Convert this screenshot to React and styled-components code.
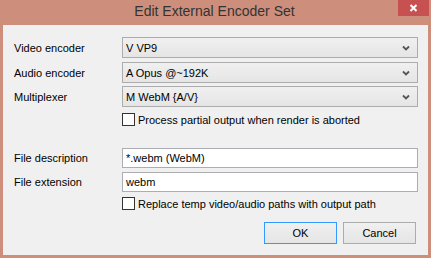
import React from 'react';
import styled, { createGlobalStyle } from 'styled-components';

const GlobalStyle = createGlobalStyle`
  html, body {
    margin: 0;
    padding: 0;
    background: #cd8e7b;
  }
  body {
    font-family: 'Liberation Sans', Arial, sans-serif;
    font-size: 11px;
    color: #000;
  }
`;

const Window = styled.div`
  width: 431px;
  height: 258px;
  box-sizing: border-box;
  background: #cd8e7b;
  display: flex;
  flex-direction: column;
`;

const TitleBar = styled.div`
  height: 25px;
  flex: none;
  display: grid;
  grid-template-columns: 1fr auto 1fr;
  padding-right: 2px;
`;

const Title = styled.div`
  grid-column: 2;
  font-size: 14px;
  line-height: 22px;
  color: #333;
  white-space: nowrap;
`;

const CloseButton = styled.div`
  grid-column: 3;
  justify-self: end;
  width: 31px;
  height: 16px;
  background: #c75050;
  display: flex;
  align-items: center;
  justify-content: center;
`;

const Client = styled.div`
  flex: 1;
  margin: 0 3px 3px;
  background: #f0f0f0;
  padding: 12px 10px 0 11px;
  display: flex;
  flex-direction: column;
`;

const FieldRow = styled.div`
  display: grid;
  grid-template-columns: 108px 296px;
  align-items: center;
  margin-top: ${(p) => p.$space || 0}px;
`;

const Label = styled.span`
  white-space: nowrap;
`;

const Combo = styled.div`
  grid-column: 2;
  height: 21px;
  box-sizing: border-box;
  border: 1px solid #acacac;
  background: linear-gradient(#f0f0f0, #e5e5e5);
  display: flex;
  align-items: center;
  padding: 0 7px 0 3px;
  justify-content: space-between;
`;

const TextInput = styled.div`
  grid-column: 2;
  height: 20px;
  box-sizing: border-box;
  border: 1px solid #abadb3;
  background: #fff;
  display: flex;
  align-items: center;
  padding: 0 3px;
`;

const CheckRow = styled.label`
  grid-column: 2;
  display: flex;
  align-items: center;
  gap: 3px;
  height: 13px;
  white-space: nowrap;
`;

const Box = styled.span`
  width: 13px;
  height: 13px;
  box-sizing: border-box;
  border: 1px solid #333;
  background: #fff;
  flex: none;
`;

const ButtonBar = styled.div`
  display: flex;
  justify-content: flex-end;
  gap: 6px;
  margin-top: 12px;
  padding-right: 2px;
`;

const Button = styled.div`
  width: 73px;
  height: 22px;
  box-sizing: border-box;
  border: 1px solid ${(p) => (p.$default ? '#3399ff' : '#acacac')};
  background: linear-gradient(#f0f0f0, #e5e5e5);
  display: flex;
  align-items: center;
  justify-content: center;
`;

const Chevron = () => (
  <svg width="8" height="6" viewBox="0 0 8 6">
    <path d="M1 1.5 L4 4.5 L7 1.5" fill="none" stroke="#555" strokeWidth="1.8" />
  </svg>
);

const CloseIcon = () => (
  <svg width="9" height="8" viewBox="0 0 9 8">
    <path d="M1.5 1 L7.5 7 M7.5 1 L1.5 7" stroke="#fff" strokeWidth="2" />
  </svg>
);

const selects = [
  { label: 'Video encoder', value: 'V VP9', space: 0 },
  { label: 'Audio encoder', value: 'A Opus @~192K', space: 4 },
  { label: 'Multiplexer', value: 'M WebM {A/V}', space: 3 },
];

export default function App() {
  return (
    <>
      <GlobalStyle />
      <Window>
        <TitleBar>
          <Title>Edit External Encoder Set</Title>
          <CloseButton>
            <CloseIcon />
          </CloseButton>
        </TitleBar>
        <Client>
          {selects.map((s) => (
            <FieldRow key={s.label} $space={s.space}>
              <Label>{s.label}</Label>
              <Combo>
                <span>{s.value}</span>
                <Chevron />
              </Combo>
            </FieldRow>
          ))}
          <FieldRow $space={6}>
            <CheckRow>
              <Box />
              Process partial output when render is aborted
            </CheckRow>
          </FieldRow>
          <FieldRow $space={22}>
            <Label>File description</Label>
            <TextInput>*.webm (WebM)</TextInput>
          </FieldRow>
          <FieldRow $space={4}>
            <Label>File extension</Label>
            <TextInput>webm</TextInput>
          </FieldRow>
          <FieldRow $space={5}>
            <CheckRow>
              <Box />
              Replace temp video/audio paths with output path
            </CheckRow>
          </FieldRow>
          <ButtonBar>
            <Button $default>OK</Button>
            <Button>Cancel</Button>
          </ButtonBar>
        </Client>
      </Window>
    </>
  );
}
